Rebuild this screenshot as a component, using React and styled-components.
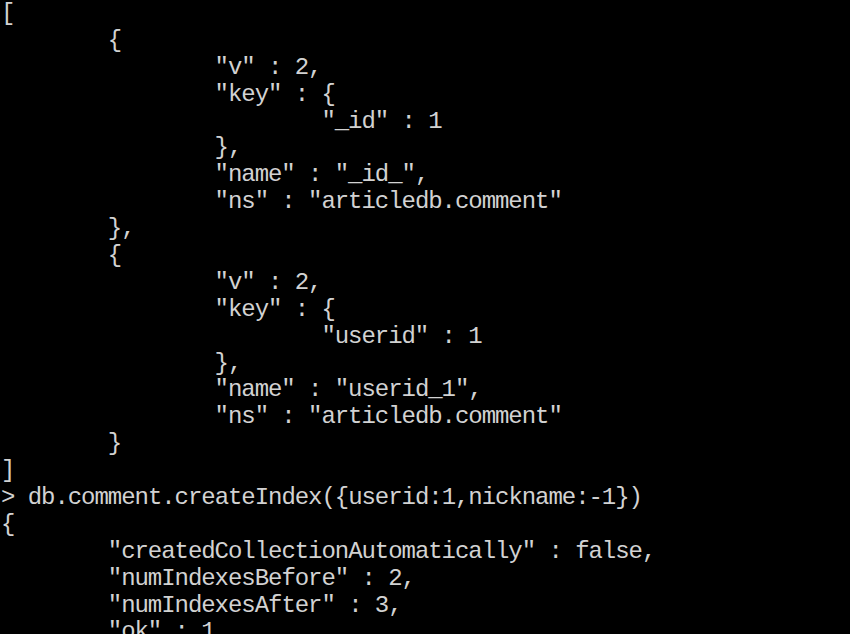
import React from "react";
import styled, { createGlobalStyle } from "styled-components";

const CHAR = 13.35;

const Global = createGlobalStyle`
  html, body {
    margin: 0;
    padding: 0;
    background: #000;
  }
`;

const Console = styled.div`
  width: 850px;
  height: 634px;
  overflow: hidden;
  background: #000;
  color: #d2d2d2;
  font-family: "Liberation Mono", "Courier New", monospace;
  font-size: 24px;
  letter-spacing: -1.05px;
  line-height: 26.9px;
  padding: 1px 0 0 1px;
  box-sizing: border-box;
`;

const Line = styled.div`
  white-space: pre;
  height: 26.9px;
  padding-left: ${(p) => p.$indent * 8 * CHAR}px;
`;

const lines = [
  [0, "["],
  [1, "{"],
  [2, '"v" : 2,'],
  [2, '"key" : {'],
  [3, '"_id" : 1'],
  [2, "},"],
  [2, '"name" : "_id_",'],
  [2, '"ns" : "articledb.comment"'],
  [1, "},"],
  [1, "{"],
  [2, '"v" : 2,'],
  [2, '"key" : {'],
  [3, '"userid" : 1'],
  [2, "},"],
  [2, '"name" : "userid_1",'],
  [2, '"ns" : "articledb.comment"'],
  [1, "}"],
  [0, "]"],
  [0, "> db.comment.createIndex({userid:1,nickname:-1})"],
  [0, "{"],
  [1, '"createdCollectionAutomatically" : false,'],
  [1, '"numIndexesBefore" : 2,'],
  [1, '"numIndexesAfter" : 3,'],
  [1, '"ok" : 1'],
];

export default function App() {
  return (
    <>
      <Global />
      <Console>
        {lines.map(([indent, text], i) => (
          <Line key={i} $indent={indent}>
            {text}
          </Line>
        ))}
      </Console>
    </>
  );
}
